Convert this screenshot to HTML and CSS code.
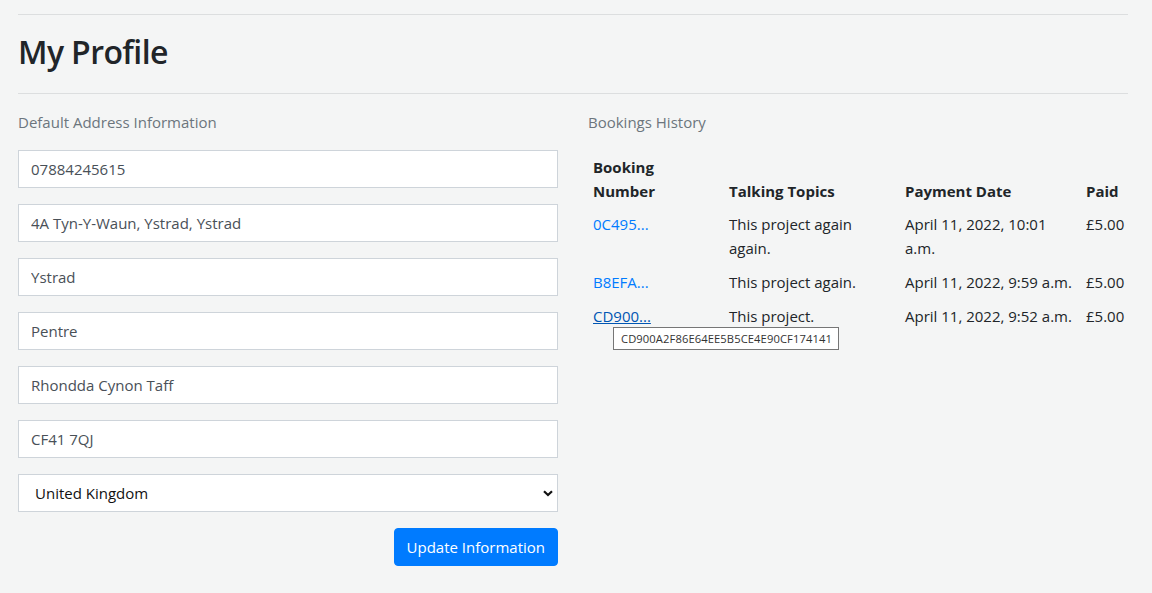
FILE: index.html
```html
<!DOCTYPE html>
<html lang="en">
<head>
<meta charset="utf-8">
<title>My Profile</title>
<link rel="stylesheet" href="styles.css">
</head>
<body>
<div class="container">
  <hr class="rule rule-top">
  <h1 class="title">My Profile</h1>
  <hr class="rule">
  <div class="row">
    <section class="col">
      <p class="label">Default Address Information</p>
      <form class="form">
        <input class="field" type="text" value="07884245615">
        <input class="field" type="text" value="4A Tyn-Y-Waun, Ystrad, Ystrad">
        <input class="field" type="text" value="Ystrad">
        <input class="field" type="text" value="Pentre">
        <input class="field" type="text" value="Rhondda Cynon Taff">
        <input class="field" type="text" value="CF41 7QJ">
        <div class="select-wrap">
          <select class="field select">
            <option>United Kingdom</option>
          </select>
          <svg class="chevron" width="10" height="7" viewBox="0 0 10 7"><path d="M1 1.2 L5 5 L9 1.2" fill="none" stroke="#111" stroke-width="2.2"/></svg>
        </div>
        <div class="actions">
          <button type="button" class="btn">Update Information</button>
        </div>
      </form>
    </section>
    <section class="col">
      <p class="label">Bookings History</p>
      <div class="table-wrap">
        <table class="table">
          <colgroup>
            <col class="c1"><col class="c2"><col class="c3"><col class="c4">
          </colgroup>
          <thead>
            <tr><th>Booking Number</th><th>Talking Topics</th><th>Payment Date</th><th>Paid</th></tr>
          </thead>
          <tbody>
            <tr><td><a href="#" class="link">0C495...</a></td><td>This project again again.</td><td>April 11, 2022, 10:01 a.m.</td><td>£5.00</td></tr>
            <tr><td><a href="#" class="link">B8EFA...</a></td><td>This project again.</td><td>April 11, 2022, 9:59 a.m.</td><td>£5.00</td></tr>
            <tr><td><a href="#" class="link hover">CD900...</a></td><td>This project.</td><td>April 11, 2022, 9:52 a.m.</td><td>£5.00</td></tr>
          </tbody>
        </table>
        <div class="tooltip">CD900A2F86E64EE5B5CE4E90CF174141</div>
      </div>
    </section>
  </div>
</div>
</body>
</html>
```
FILE: styles.css
```css
* { box-sizing: border-box; }
html, body { margin: 0; padding: 0; }
body {
  background: #f4f5f5;
  font-family: "Open Sans", "Noto Sans", sans-serif;
  font-size: 15px;
  line-height: 24px;
  color: #212529;
}
.container {
  width: 1110px;
  margin-left: 18px;
  padding-top: 14px;
}
.rule {
  border: 0;
  border-top: 1px solid #dcdedf;
  margin: 0;
}
.title {
  font-size: 32px;
  font-weight: 600;
  line-height: 38px;
  margin: 0;
  padding: 18px 0 22px;
  letter-spacing: -0.6px;
}
.row {
  display: flex;
  gap: 30px;
  padding-top: 16px;
}
.col { width: 540px; }
.label {
  margin: 0 0 16px;
  color: #6c757d;
}
.form {
  display: flex;
  flex-direction: column;
  gap: 16px;
}
.field {
  display: block;
  width: 100%;
  height: 38px;
  padding: 6px 12px;
  font-family: inherit;
  font-size: 15px;
  line-height: 24px;
  color: #495057;
  background: #fff;
  border: 1px solid #ced4da;
  border-radius: 0;
  outline: none;
}
.select-wrap { position: relative; }
.select {
  -webkit-appearance: none;
  appearance: none;
  padding-left: 16px;
  color: #111;
}
.chevron {
  position: absolute;
  right: 5px;
  top: 16px;
}
.actions {
  display: flex;
  justify-content: flex-end;
}
.btn {
  height: 38px;
  padding: 6px 12px;
  font-family: inherit;
  font-size: 15px;
  line-height: 24px;
  color: #fff;
  background: #007bff;
  border: 1px solid #007bff;
  border-radius: 4px;
}
.table-wrap { position: relative; }
.table {
  width: 540px;
  table-layout: fixed;
  border-collapse: collapse;
}
.c1 { width: 136px; }
.c2 { width: 176px; }
.c3 { width: 181px; }
.c4 { width: 47px; }
.table th, .table td {
  padding: 4.8px 5px;
  text-align: left;
  vertical-align: bottom;
  font-size: 15px;
}
.table td { vertical-align: top; }
.table th { font-weight: 700; }
.link { color: #007bff; text-decoration: none; }
.link.hover { color: #0056b3; text-decoration: underline; }
.tooltip {
  position: absolute;
  left: 25px;
  top: 177px;
  width: 226px;
  height: 23px;
  padding: 0 7px;
  background: #fff;
  border: 1px solid #767676;
  font-size: 11.2px;
  letter-spacing: 0.1px;
  line-height: 21px;
  color: #333;
  white-space: nowrap;
}
```
